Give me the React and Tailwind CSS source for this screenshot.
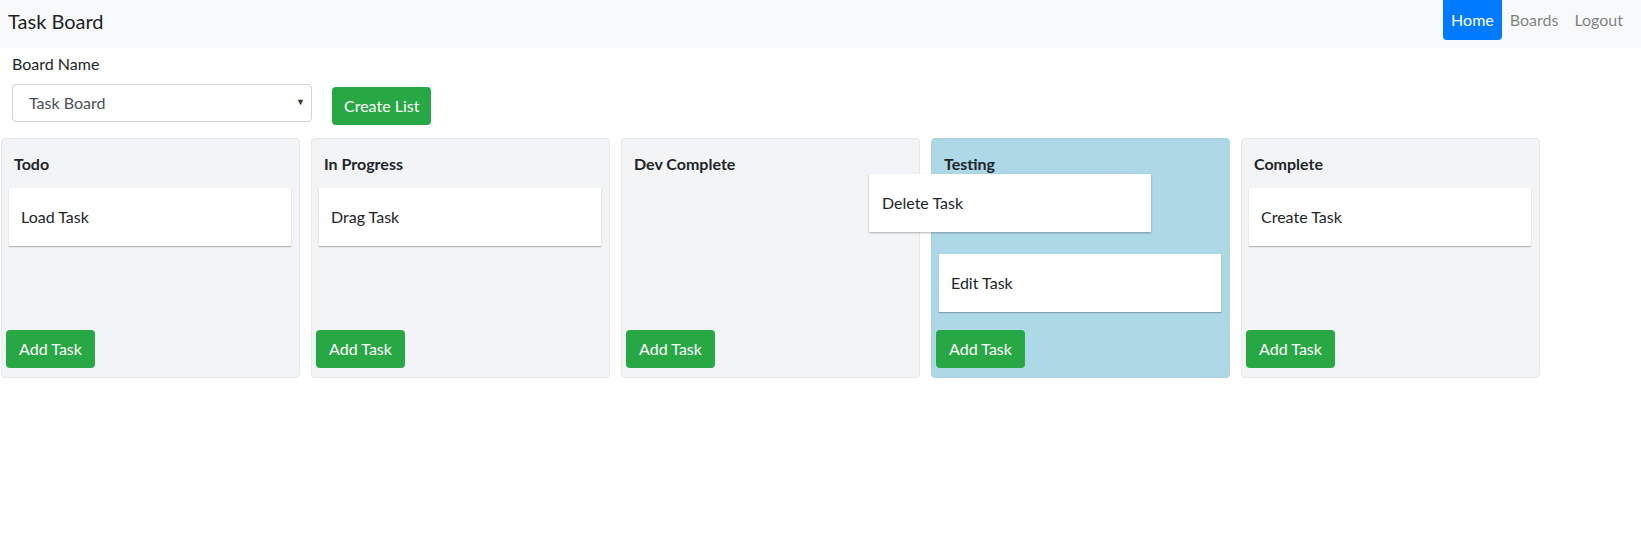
import React from 'react';

const font = { fontFamily: '"Segoe UI", Lato, "Noto Sans", sans-serif' };

const lists = [
    { id: 'todo', title: 'Todo', tasks: ['Load Task'] },
    { id: 'progress', title: 'In Progress', tasks: ['Drag Task'] },
    { id: 'dev', title: 'Dev Complete', tasks: [] },
    { id: 'testing', title: 'Testing', tasks: ['Edit Task'], over: true },
    { id: 'complete', title: 'Complete', tasks: ['Create Task'] },
];

const TaskCard = ({ text }) => (
    <div className="w-[282px] h-[58px] mb-[8px] bg-white flex items-center pl-[12px] text-[16px] text-[#212529] shadow-[0_1px_1px_rgba(0,0,0,0.25)]">
        {text}
    </div>
);

const TaskList = ({ list }) => (
    <div
        className={
            list.over
                ? 'w-[299px] h-[240px] shrink-0 flex flex-col rounded-[4px] border border-[#a9d3e1] bg-[#add8e6]'
                : 'w-[299px] h-[240px] shrink-0 flex flex-col rounded-[4px] border border-[#e6e8eb] bg-[#f3f4f6]'
        }
    >
        <div className="pt-[13px] pl-[12px] text-[16px] leading-[24px] font-bold text-[#212529]">{list.title}</div>
        <div className="mt-[12px] pl-[7px]">
            {list.over && <div className="h-[58px] mb-[8px]" />}
            {list.tasks.map((t) => (
                <TaskCard key={t} text={t} />
            ))}
        </div>
        <button className="mt-auto mb-[9px] ml-[4px] w-[89px] h-[38px] rounded-[4px] bg-[#28a745] text-white text-[16px]">
            Add Task
        </button>
    </div>
);

export default function App() {
    return (
        <div className="relative min-h-[537px] bg-white text-[#212529]" style={font}>
            <nav className="h-[48px] bg-[#f8f9fa] flex items-start justify-between pl-[8px] pr-[10px]">
                <div className="mt-[6px] text-[20px] leading-[30px] text-[rgba(0,0,0,0.9)]">Task Board</div>
                <div className="flex items-center h-[40px] text-[16px]">
                    <a className="h-[40px] px-[8px] flex items-center bg-[#007bff] text-white rounded-b-[4px]">Home</a>
                    <a className="px-[8px] text-[rgba(0,0,0,0.5)]">Boards</a>
                    <a className="px-[8px] text-[rgba(0,0,0,0.5)]">Logout</a>
                </div>
            </nav>

            <div className="pt-[4px] pl-[12px]">
                <label className="block text-[16px] leading-[24px]">Board Name</label>
                <div className="mt-[8px] flex items-start">
                    <div className="relative w-[300px] h-[38px] rounded-[4px] border border-[#ced4da] bg-white flex items-center pl-[16px] text-[16px] text-[#495057]">
                        Task Board
                        <span className="absolute right-[6px] top-[10px] text-[9px] text-[#333]">▼</span>
                    </div>
                    <button className="ml-[20px] mt-[3px] h-[38px] px-[12px] rounded-[4px] bg-[#28a745] text-white text-[16px]">
                        Create List
                    </button>
                </div>
            </div>

            <div className="mt-[13px] pl-[1px] flex gap-[11px]">
                {lists.map((l) => (
                    <TaskList key={l.id} list={l} />
                ))}
            </div>

            <div className="absolute left-[869px] top-[174px] w-[282px] h-[58px] bg-white flex items-center pl-[13px] text-[16px] text-[#212529] shadow-[0_1px_2px_rgba(0,0,0,0.3)]">
                Delete Task
            </div>
        </div>
    );
}
